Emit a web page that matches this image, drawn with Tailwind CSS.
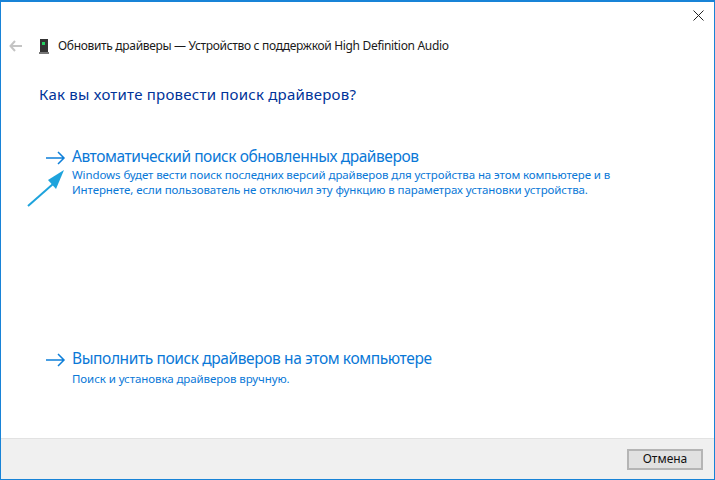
<!DOCTYPE html>
<html lang="en">
<head>
    <meta charset="UTF-8">
    <title>Обновить драйверы</title>
    <script src="https://cdn.jsdelivr.net/npm/@tailwindcss/browser@4"></script>
</head>
<body class="m-0 bg-white">
    <div class="w-[715px] h-[480px] flex flex-col border border-[#1883d7] border-t-2 font-['Noto_Sans','Open_Sans',sans-serif] overflow-hidden">
        <div class="h-[6px] relative">
            <svg class="absolute right-[10px] top-[8px]" width="11" height="11" viewBox="0 0 11 11"><path d="M0.5 0.5L10.5 10.5M10.5 0.5L0.5 10.5" stroke="#222" stroke-width="1" fill="none"/></svg>
        </div>
        <div class="flex items-center h-[20px] mt-[28px] pl-[8px]">
            <svg width="14" height="12" viewBox="0 0 14 12"><path d="M6 1L1.5 6L6 11M1.5 6H13" stroke="#c4c4c4" stroke-width="2" fill="none"/></svg>
            <svg class="ml-[16px]" width="10" height="15" viewBox="0 0 10 15"><rect x="1" y="0" width="8" height="13" fill="#333"/><rect x="3" y="3" width="3" height="3" fill="#22d060"/><rect x="0" y="13" width="10" height="2" fill="#777"/></svg>
            <span class="ml-[9px] text-[12px] leading-[20px] text-[#1a1a1a] tracking-[-0.32px]">Обновить драйверы — Устройство с поддержкой High Definition Audio</span>
        </div>
        <div class="pl-[38px] mt-[27px] text-[15px] leading-[22px] text-[#003399] tracking-[0.23px]">Как вы хотите провести поиск драйверов?</div>
        <div class="relative flex mt-[40px] pl-[45px]">
            <svg class="mt-[6px]" width="20" height="14" viewBox="0 0 20 14"><path d="M0 7H18M12 1L18 7L12 13" stroke="#0e7fd9" stroke-width="1.5" fill="none"/></svg>
            <div class="ml-[6px]">
                <div class="text-[15.5px] leading-[22px] text-[#0a78d7] tracking-[-0.44px]">Автоматический поиск обновленных драйверов</div>
                <div class="w-[560px] text-[11.5px] leading-[15px] text-[#0a78d7] tracking-[-0.09px]">Windows будет вести поиск последних версий драйверов для устройства на этом компьютере и в Интернете, если пользователь не отключил эту функцию в параметрах установки устройства.</div>
            </div>
            <svg class="absolute left-[26px] top-[19px]" width="40" height="45" viewBox="0 0 40 45"><path d="M1 42L26 20" stroke="#1ea3dc" stroke-width="2" fill="none"/><path d="M37 6L21 16L29 25Z" fill="#1ea3dc"/></svg>
        </div>
        <div class="flex mt-[150px] pl-[45px]">
            <svg class="mt-[6px]" width="20" height="14" viewBox="0 0 20 14"><path d="M0 7H18M12 1L18 7L12 13" stroke="#0e7fd9" stroke-width="1.5" fill="none"/></svg>
            <div class="ml-[6px]">
                <div class="text-[15.5px] leading-[22px] text-[#0a78d7] tracking-[-0.39px]">Выполнить поиск драйверов на этом компьютере</div>
                <div class="text-[11.5px] leading-[15px] text-[#0a78d7] mt-[2px] tracking-[-0.08px]">Поиск и установка драйверов вручную.</div>
            </div>
        </div>
        <div class="mt-auto h-[41px] bg-[#f0f0f0] border-t border-[#e2e2e2] flex items-center justify-end pr-[11px]">
            <button class="w-[76px] h-[21px] bg-[#e1e1e1] border-2 border-[#b5b5b5] text-[12px] leading-[16px] text-[#111]">Отмена</button>
        </div>
    </div>
</body>
</html>
